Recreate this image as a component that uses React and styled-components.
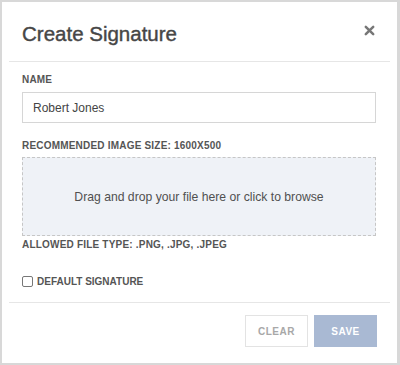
import React from 'react';
import styled, { createGlobalStyle } from 'styled-components';

const Global = createGlobalStyle`
  html, body {
    margin: 0;
    padding: 0;
    background: #ffffff;
  }
  * {
    box-sizing: border-box;
  }
`;

const Modal = styled.div`
  width: 400px;
  height: 365px;
  border: 2px solid #d8d8d8;
  border-right-width: 3px;
  background: #fff;
  font-family: "Liberation Sans", Arial, sans-serif;
  display: flex;
  flex-direction: column;
`;

const Header = styled.div`
  margin: 0 7px;
  height: 60px;
  padding: 4px 13px 0;
  border-bottom: 1px solid #e6e6e6;
  display: flex;
  align-items: center;
  justify-content: space-between;
`;

const Title = styled.h1`
  margin: 0;
  font-size: 20.5px;
  font-weight: 400;
  color: #464646;
  -webkit-text-stroke: 0.4px #464646;
`;

const Close = styled.button`
  border: 0;
  background: none;
  padding: 0;
  margin: -6px 2px 0 0;
  width: 11px;
  height: 11px;
  display: flex;
  cursor: pointer;
`;

const Body = styled.div`
  padding: 0 20px;
  display: flex;
  flex-direction: column;
`;

const Label = styled.div`
  font-size: 10px;
  line-height: 12px;
  font-weight: 700;
  color: #555;
  letter-spacing: 0.2px;
  margin-top: ${(p) => p.top}px;
`;

const Input = styled.input`
  margin-top: 6px;
  width: 354px;
  height: 31px;
  border: 1px solid #d6d6d6;
  padding: 0 10px;
  font-family: inherit;
  font-size: 12px;
  color: #444;
  outline: none;
`;

const Drop = styled.div`
  margin-top: 5px;
  width: 354px;
  height: 79px;
  background: #eff2f7;
  border: 1px dashed #c6c6c6;
  display: flex;
  align-items: center;
  justify-content: center;
  font-size: 12.2px;
  color: #505050;
`;

const CheckRow = styled.label`
  margin-top: 23px;
  display: flex;
  align-items: center;
  gap: 4px;
  height: 14px;
  font-size: 10px;
  font-weight: 700;
  color: #555;
`;

const Box = styled.span`
  width: 11px;
  height: 11px;
  border: 1px solid #777;
  border-radius: 2px;
  background: #fff;
`;

const Footer = styled.div`
  margin: 14px 7px 0;
  border-top: 1px solid #e6e6e6;
  padding: 12px 13px 0;
  display: flex;
  justify-content: flex-end;
  gap: 6px;
`;

const Button = styled.button`
  width: 63px;
  height: 32px;
  font-family: inherit;
  font-size: 10px;
  font-weight: 700;
  letter-spacing: 0.5px;
  border: 1px solid ${(p) => (p.primary ? '#a9b9d3' : '#e3e3e3')};
  background: ${(p) => (p.primary ? '#a9b9d3' : '#fff')};
  color: ${(p) => (p.primary ? '#fff' : '#a8a8a8')};
  cursor: pointer;
`;

const App = () => {
  return (
    <Modal>
      <Global />
      <Header>
        <Title>Create Signature</Title>
        <Close aria-label="Close">
          <svg width="11" height="11" viewBox="0 0 11 11">
            <path d="M1.8 1.8 L9.2 9.2 M9.2 1.8 L1.8 9.2" stroke="#777" strokeWidth="2.5" strokeLinecap="round" />
          </svg>
        </Close>
      </Header>
      <Body>
        <Label top={12}>NAME</Label>
        <Input defaultValue="Robert Jones" />
        <Label top={17}>RECOMMENDED IMAGE SIZE: 1600X500</Label>
        <Drop>Drag and drop your file here or click to browse</Drop>
        <Label top={3}>ALLOWED FILE TYPE: .PNG, .JPG, .JPEG</Label>
        <CheckRow>
          <Box />
          DEFAULT SIGNATURE
        </CheckRow>
      </Body>
      <Footer>
        <Button>CLEAR</Button>
        <Button primary>SAVE</Button>
      </Footer>
    </Modal>
  );
};

export default App;
